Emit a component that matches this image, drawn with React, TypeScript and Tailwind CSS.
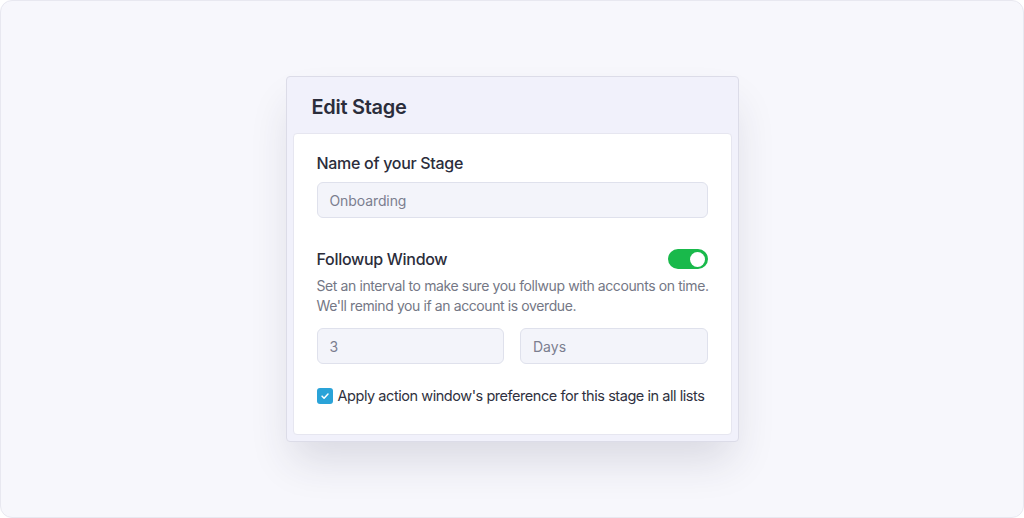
import React from "react";

export default function App() {
  const font = { fontFamily: "Inter, 'Noto Sans', sans-serif" };
  return (
    <div className="w-[1024px] h-[518px] bg-white" style={font}>
      <div className="w-full h-full rounded-[12px] border border-[#e8e8f0] bg-[#f7f7fc] flex items-center justify-center">
        <div className="w-[453px] h-[366px] rounded-[4px] border border-[#dcdce8] bg-[#f1f1fb] shadow-[0_24px_40px_-6px_rgba(40,40,70,0.14)] flex flex-col">
          <div className="h-[56px] shrink-0 flex items-center pl-[25px] pt-[4px]">
            <h1 className="text-[20px] font-semibold text-[#2b2d3b] tracking-[-0.3px]">Edit Stage</h1>
          </div>
          <div className="mx-[6px] mb-[6px] flex-1 bg-white rounded-[4px] border border-[#e6e6f0] px-[23px] pt-[17px]">
            <div className="text-[16px] font-medium text-[#2b2d3b] tracking-[-0.3px] leading-[24px]">Name of your Stage</div>
            <div className="mt-[7px] h-[36px] rounded-[6px] border border-[#dfe1ec] bg-[#f3f4fa] flex items-center px-[12px] text-[14px] text-[#7b7e8f] tracking-[-0.1px]">
              Onboarding
            </div>
            <div className="mt-[30px] flex items-center justify-between h-[22px]">
              <div className="text-[16px] font-medium text-[#2b2d3b] tracking-[-0.3px]">Followup Window</div>
              <div className="w-[40px] h-[20px] rounded-full bg-[#19b94b] flex items-center justify-end pr-[3px]">
                <div className="w-[15px] h-[15px] rounded-full bg-white" />
              </div>
            </div>
            <div className="mt-[6px] text-[14px] leading-[20px] text-[#747785] tracking-[-0.4px] whitespace-nowrap">
              <div>Set an interval to make sure you follwup with accounts on time.</div>
              <div>We'll remind you if an account is overdue.</div>
            </div>
            <div className="mt-[12px] grid grid-cols-2 gap-[16px]">
              <div className="h-[36px] rounded-[6px] border border-[#dfe1ec] bg-[#f3f4fa] flex items-center px-[12px] text-[14px] text-[#7b7e8f]">3</div>
              <div className="h-[36px] rounded-[6px] border border-[#dfe1ec] bg-[#f3f4fa] flex items-center px-[12px] text-[14px] text-[#7b7e8f]">Days</div>
            </div>
            <div className="mt-[22px] flex items-center gap-[5px] h-[20px]">
              <div className="w-[16px] h-[16px] shrink-0 rounded-[3px] bg-[#2aa3d8] flex items-center justify-center">
                <svg width="10" height="10" viewBox="0 0 12 12" fill="none">
                  <path d="M2.5 6.2l2.4 2.4L9.6 3.6" stroke="white" strokeWidth="1.8" strokeLinecap="round" strokeLinejoin="round" />
                </svg>
              </div>
              <div className="text-[14.5px] text-[#2f3140] tracking-[-0.45px] whitespace-nowrap">Apply action window's preference for this stage in all lists</div>
            </div>
          </div>
        </div>
      </div>
    </div>
  );
}
